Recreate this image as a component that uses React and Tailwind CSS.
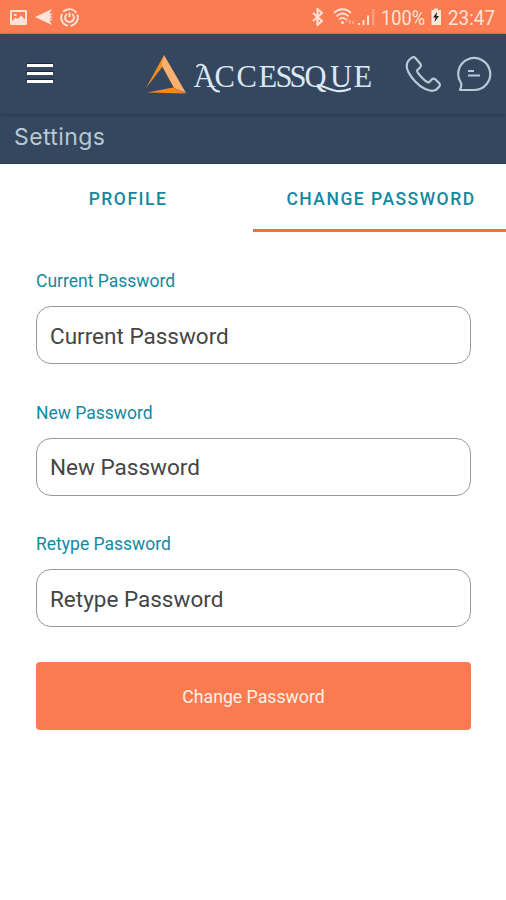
import React from "react";

function StatusBar() {
  return (
    <div className="flex h-[34px] items-center bg-[#fc7c52] pr-[5px] pl-[10px] text-[#fde3d9]">
      <svg width="17" height="17" viewBox="0 0 17 17" fill="currentColor">
        <path fillRule="evenodd" d="M1.5 1h14A1.3 1.3 0 0 1 17 2.3v12.4a1.3 1.3 0 0 1-1.300 1.3H1.300A1.300 1.300 0 0 1 0 14.700V2.300A1.300 1.300 0 0 1 1.500 1ZM2 3v9l3.500-3.500 2 1.500L11 6.500l4 4V3ZM4 5h2.500v2H4Z" />
      </svg>
      <svg className="ml-[8px]" width="18" height="18" viewBox="0 0 18 18" fill="currentColor">
        <path d="M0 9 17 1l-2.500 4.500 3.500.5-3.500 2 3.500 1-3.500 1.200 3.500 2-3.500.3L17 17Z" />
      </svg>
      <svg className="ml-[7px]" width="19" height="19" viewBox="0 0 19 19" fill="none" stroke="currentColor" strokeWidth="1.900">
        <circle cx="9.500" cy="9.500" r="8.300" strokeDasharray="15 2.380" transform="rotate(-20 9.500 9.500)" />
        <path d="M7 6a4.400 4.400 0 1 0 5 0M9.500 4.500v4.500" />
      </svg>
      <svg className="ml-auto" width="12" height="18" viewBox="0 0 12 18" fill="none" stroke="currentColor" strokeWidth="2">
        <path d="m1 5 9 8-4.500 4V1L10 5l-9 8" />
      </svg>
      <svg className="ml-[9px]" width="23" height="18" viewBox="0 0 23 18" fill="none" stroke="currentColor" strokeWidth="1.800">
        <path d="M1 5C6 0 13 0 18 5M3.500 8.300c4-3.700 8-3.700 12 0M6.200 11.500c2.200-2.300 4.500-2.300 6.700 0" />
        <circle cx="9.500" cy="14.500" r="1.500" fill="currentColor" stroke="none" />
        <path d="m14.500 10-1 4M17 12v4m3-3v3" opacity=".45" />
      </svg>
      <svg className="ml-[2px]" width="18" height="18" viewBox="0 0 18 18" fill="currentColor">
        <path d="M0 15h2v2H0ZM4.500 12h2v5h-2ZM9 7.500h2V17H9Z" />
        <path d="M14 1h2.500v16H14Z" opacity=".3" />
      </svg>
      <svg className="ml-[5px] font-['Roboto',sans-serif] text-[20px]" width="120" height="24" viewBox="0 0 120 24" fill="currentColor">
        <text x="0" y="19.500" textLength="44" lengthAdjust="spacingAndGlyphs">100%</text>
        <path d="M50.500 5h2.500V3.500h4V5h3v15h-9.500Z" />
        <path d="m56 7-4 5.500h2.500L53.500 17l4.500-6H55.500Z" fill="#292421" />
        <text x="67" y="19.500" textLength="47" lengthAdjust="spacingAndGlyphs">23:47</text>
      </svg>
    </div>
  );
}

function Logo() {
  return (
    <svg width="232" height="48" viewBox="143 49 232 48" role="img" aria-label="Accessque">
      <path d="m164 54-1 11-17 22Z" fill="#f58a20" />
      <path d="m164 54 22 38-12-5-12.500-23Z" fill="#fbb071" />
      <path d="m147 91.500 26-5 13 6Z" fill="#f6871e" />
      <g fill="#dce8f4" className="font-['Liberation_Serif',serif]">
        <text y="85.500" fontSize="30.500" x="193.500 214.500 236.500 258.500 275.500 289.500 304.500 330 353.500">ACCESSQUE</text>
      </g>
      <g fill="none" stroke="#dce8f4" strokeLinecap="round">
        <path d="M197 65.500q2-3 7-1" strokeWidth="1.800" />
        <path d="M210 82q3 8 9 8.500" strokeWidth="2.200" />
        <path d="M318 84c10 2 17 10 32 4" strokeWidth="2.200" />
      </g>
    </svg>
  );
}

function Header() {
  return (
    <header className="relative flex h-[80px] items-center bg-[#34475e] shadow-[0_1px_3px_0px_#26384d]">
      <button className="mb-[2px] ml-[27px] flex w-[26px] flex-col gap-[5px]" aria-label="Menu">
        <span className="h-[3px] bg-white shadow-[0_-1px_1px_#132347]" />
        <span className="h-[3px] bg-white shadow-[0_-1px_1px_#132347]" />
        <span className="h-[3px] bg-white shadow-[0_-1px_1px_#132347]" />
      </button>
      <div className="ml-[90px]"><Logo /></div>
      <svg className="ml-[30px]" width="37" height="38" viewBox="405 55 37 38" fill="none" stroke="#b8cad7" strokeWidth="2.200" strokeLinejoin="round">
        <path d="m409 60 3-2.500q2-1 3.500.5l5 6q1 2-.5 3.500l-3 3q0 2 4.800 7t7 5l3.200-3.300q1.800-1.200 3.500.3l4 4.100q1 1.700-.5 3.300l-3.300 3.200c-6 2.600-15-2.400-20.500-8.500s-12-15.500-6.200-21.600Z" />
      </svg>
      <svg className="ml-[14px]" width="38" height="38" viewBox="456 55 38 38" fill="none" stroke="#b8cad7" strokeWidth="2.200" strokeLinejoin="round">
        <path d="M460 90h14a16 16 0 1 0-13-7c1 2 .3 4-1 7ZM468 71h6M468 75.500h12" />
      </svg>
    </header>
  );
}

function Field({ label }) {
  return (
    <label className="block h-[131.500px]">
      <span className="block h-[35px] text-[17.500px] leading-[20px] text-[#13899f]">{label}</span>
      <input
        type="password"
        placeholder={label}
        className="block h-[58px] w-full rounded-[15px] border border-[#999] bg-white px-[13px] pt-[1px] text-[22.500px] placeholder:text-[#454545] placeholder:opacity-100"
      />
    </label>
  );
}

export default function App() {
  return (
    <div className="flex h-[900px] w-[506px] flex-col overflow-hidden bg-white font-['Roboto',sans-serif]">
      <StatusBar />
      <Header />
      <div className="h-[50px] border-b border-[#1d4059] bg-[#34475e] pl-[14px] font-['Inter',sans-serif] text-[23px] leading-[46px] tracking-[0.400px] text-[#b9c8d2]">
        Settings
      </div>
      <nav className="grid h-[68px] grid-cols-2 text-center text-[17.500px] leading-[64px] font-medium tracking-[1.500px] text-[#13899f]">
        <button className="border-b-[3px] border-transparent pt-[5px] pl-[3px] leading-[60px]">PROFILE</button>
        <button className="border-b-[3px] border-[#ef6f43] pt-[5px] pl-[3px] leading-[60px]">CHANGE PASSWORD</button>
      </nav>
      <form className="pt-[39px] pr-[35px] pl-[36px]">
        <Field label="Current Password" />
        <Field label="New Password" />
        <Field label="Retype Password" />
        <button type="button" className="-mt-[4px] h-[68px] w-full rounded-[4px] bg-[#fb7b51] pt-[3px] text-[17.700px] text-[#fff0e8]">
          Change Password
        </button>
      </form>
    </div>
  );
}
